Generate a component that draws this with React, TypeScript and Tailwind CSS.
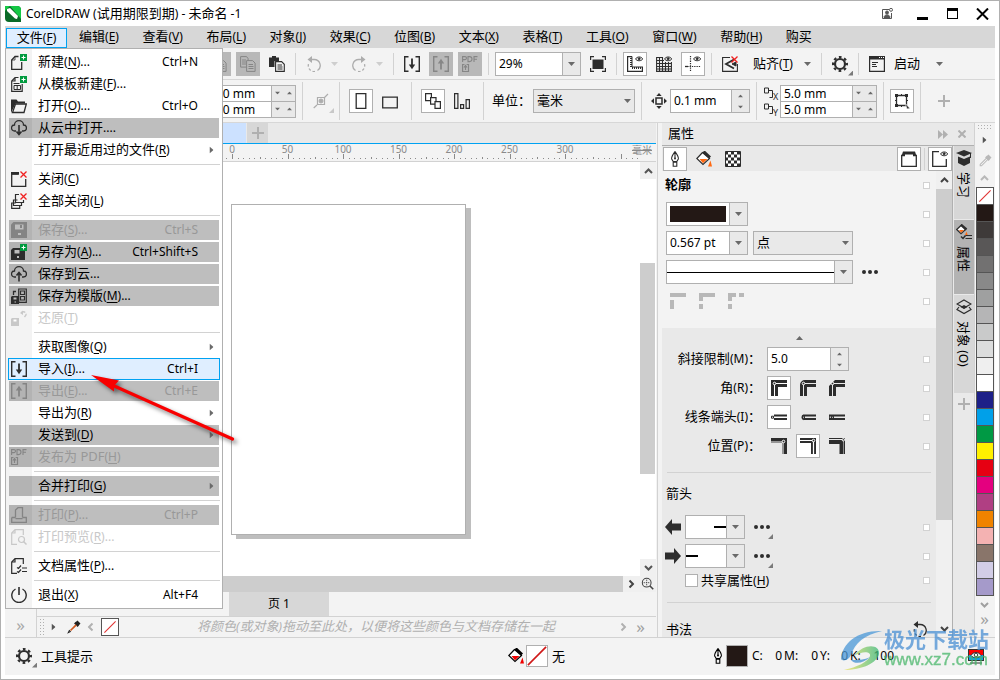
import type { ReactNode } from "react";

const FONT = "font-['Noto_Sans','Noto_Sans_CJK_SC',sans-serif]";

/* ---------- small shared pieces ---------- */

function Icon({ children, className = "" }: { children: ReactNode; className?: string }) {
  return (
    <svg
      viewBox="0 0 16 16"
      width="16"
      height="16"
      fill="none"
      stroke="currentColor"
      className={`shrink-0 ${className}`}
      aria-hidden="true"
    >
      {children}
    </svg>
  );
}

function Caret({ up = false, className = "" }: { up?: boolean; className?: string }) {
  return (
    <svg viewBox="0 0 7 4" width="7" height="4" className={`shrink-0 ${className}`} aria-hidden="true">
      <path d={up ? "M0 4 L3.5 0 L7 4 Z" : "M0 0 L3.5 4 L7 0 Z"} fill="currentColor" />
    </svg>
  );
}

function Label({ text, k, after = "" }: { text: string; k?: string; after?: string }) {
  return (
    <span className="whitespace-nowrap">
      {text}
      <span className="text-xs">
        {k && (
          <>
            (<u className="underline-offset-2">{k}</u>)
          </>
        )}
        {after}
      </span>
    </span>
  );
}

function Sep({ tall = false }: { tall?: boolean }) {
  return <div className={`mx-px w-px shrink-0 bg-[#d2d2d2] ${tall ? "h-[38px]" : "h-[22px]"}`} />;
}

type Look = "plain" | "boxed" | "grey";

function Tool({ label, look = "plain", children }: { label: string; look?: Look; children: ReactNode }) {
  const looks = {
    plain: "text-[#2d2d2d]",
    boxed: "border border-[#b0b0b0] bg-white text-[#2d2d2d]",
    grey: "bg-[#b8b8b8] text-[#868686]",
  };
  return (
    <button aria-label={label} className={`relative flex size-6 shrink-0 items-center justify-center ${looks[look]}`}>
      {children}
    </button>
  );
}

/* Triangle in the corner of a button that opens a flyout */
function Corner() {
  return <span className="absolute -right-px bottom-0 size-[5px] bg-[#7a7a7a] [clip-path:polygon(100%_0,100%_100%,0_100%)]" />;
}

const Plus = () => (
  <g stroke="none">
    <path d="M9 0h7v7H9z" fill="#009a3e" />
    <path d="M12 1.500h1v1.500h1.500v1H13v1.500h-1V4h-1.500V3H12z" fill="#fff" />
  </g>
);
const Cross = () => <path d="M9.500 .5l6 6m0-6l-6 6" stroke="#f02020" strokeWidth="1.300" />;
const Eye = () => (
  <g strokeWidth="1">
    <path d="M8.500 3C10 .3 14.500 .3 15.700 3C14.500 5.300 10 5.300 8.500 3z" />
    <circle cx="12.200" cy="2.800" r="1" fill="currentColor" />
  </g>
);

/* ---------- icons ---------- */

const icons = {
  new: <><path d="M7.500 2.500H4L.7 6v9.300h10V8" strokeWidth="1.300" /><path d="M4 2.500V6H.7" strokeWidth=".8" /><Plus /></>,
  template: <><path d="M7.500 1.500H4L.7 5v10.300h10.500V8M4 1.500V5H1" strokeWidth="1.200" /><path d="M2.500 7.500h6M3 9.500h6.500v4H3zM6.200 9.500v4" /><Plus /></>,
  open: <><path d="M0 15V1.500h5.500L7 3.500h7V5.500H4.500z" fill="currentColor" stroke="none" /><path d="M4.500 6h10.800L13 14.500H1.500z" fill="#f3f3f3" strokeWidth="1.300" /></>,
  cloudDown: <><path d="M5 11H3.500a3 3 0 0 1 0-6C3.500 2.500 5.500.7 8 .7s4.500 1.800 4.500 4.300a3 3 0 0 1 0 6H11" strokeWidth="1.300" /><path d="M8 5v9M5.500 11.500L8 14.500l2.500-3" strokeWidth="1.600" /></>,
  cloudUp: <><path d="M5 11H3.500a3 3 0 0 1 0-6C3.500 2.500 5.500.7 8 .7s4.500 1.800 4.500 4.300a3 3 0 0 1 0 6H11" strokeWidth="1.300" /><path d="M8 15.500V7M5.500 9.500L8 6.500l2.500 3" strokeWidth="1.600" /></>,
  close: <><path d="M.7 2v13.300h14V8M.7 3h7" strokeWidth="1.300" /><path d="M0 1h8v2.500H0z" fill="currentColor" stroke="none" /><Cross /></>,
  closeAll: <><path d="M8 1.500H4.500V5M4.500 4.500v5h8V7M2.500 6.500v6h8v-3M.7 9.500v5.800h8v-3M.7 10h4M2.500 7h4" strokeWidth="1.200" /><Cross /></>,
  save: <><path d="M2.500 0H16v16H0V2.500z" fill="currentColor" stroke="none" /><path d="M4 2.500h8.500v5H4zM7 11h3v2H7z" fill="#bebebe" stroke="none" /><path d="M9 3v3h2V3z" fill="currentColor" stroke="none" /></>,
  saveAs: <><path d="M2 4h12v12H0V6z" fill="currentColor" stroke="none" /><path d="M3.500 6h5v3.500h-5zM6 12h2v2H6z" fill="#bebebe" stroke="none" /><Plus /></>,
  saveTemplate: <><path d="M7.700 1h7.600v13.300H7.700zM9.500 3h4v3.500h-4zM9.500 8.500h4v3.500h-4z" strokeWidth="1.200" /><path d="M5 3.500H2.500V7" strokeWidth="1.300" /><path d="M1 8h7v8H0V9z" fill="currentColor" stroke="none" /><path d="M2.500 9.500h3v2h-3zM3.500 13.500h1.500v1H3.500z" fill="#bebebe" stroke="none" /></>,
  revert: <><path d="M1 8h7v8H0V9z" fill="currentColor" stroke="none" /><path d="M2.500 9.500h3v2h-3z" fill="#fff" stroke="none" /><path d="M10.500 2.500C13 .8 15.500 2.500 15 5l-1.500 2" strokeWidth="1.300" strokeDasharray="4 1.500" /><path d="M9 3l3-2.500V5z" fill="currentColor" stroke="none" /></>,
  import: <><path d="M4.500 .7H.7v14.600H4.500M11.500 .7h3.800v14.600H11.500" strokeWidth="1.400" /><path d="M8 2.500v8" strokeWidth="1.800" /><path d="M4.800 8.500h6.400L8 13.200z" fill="currentColor" stroke="none" /></>,
  export: <><path d="M4.500 .7H.7v14.600H4.500M11.500 .7h3.800v14.600H11.500" strokeWidth="1.400" /><path d="M8 13.500v-8" strokeWidth="1.800" /><path d="M4.800 7.500h6.400L8 2.800z" fill="currentColor" stroke="none" /></>,
  pdf: <><path d="M.6 6V.6H3a1.500 1.500 0 0 1 0 3H.6M6 .6v5h1.500a2.500 2.500 0 0 0 0-5zM12 6V.6h3.500M12 3.200h3" strokeWidth="1.100" /><path d="M2.500 8.500H.6v7H6.500v-7H4.600M3.500 14V9.500M2 11.500l1.500-2 1.500 2" strokeWidth="1.200" /></>,
  print: <><path d="M4.500 10.500V3L7 .7h4.500v9.800M.7 10.500h3.800M11.500 10.500h3.800v4.800H.7v-4.800M4.500 11.700h7" strokeWidth="1.300" /></>,
  preview: <><path d="M6 15.300H.7V4L4 .7h8.300V6M4 .7V4H.7" strokeWidth="1.200" /><circle cx="10.500" cy="10.500" r="3" strokeWidth="1.200" /><path d="M12.500 12.500l3 3" strokeWidth="1.500" /></>,
  docProps: <><path d="M6 15.300H.7V4L4 .7h8.300V6M4 .7V4H.7" strokeWidth="1.200" /><path d="M6 9.500l1.500 1L10 7.500M6 13.500l1.500 1 2.500-3M11 10h5M11 13.500h5" strokeWidth="1.200" /></>,
  power: <><path d="M4.500 2A7.200 7.200 0 1 0 11.500 2" strokeWidth="1.400" /><path d="M8 0v8" strokeWidth="1.600" /></>,
  copy: <><path d="M.6 .6h6l1.500 2v8.500H.6zM2 4h4M2 6h4M2 8h4" /><path d="M6.600 4.600h6l2.500 2.500v8.300H6.600z" fill="#b8b8b8" /><path d="M8.500 8.500h4.500M8.500 10.500h5M8.500 12.500h5" /></>,
  paste: <><path d="M0 1.500h3V0h4v1.500h3V5H5.500v6H0z" fill="currentColor" stroke="none" /><path d="M6.600 5.600h6l2.700 2.700v7.100H6.600zM8.500 9h4.500M8.500 11h5M8.500 13h5" strokeWidth="1.100" /></>,
  undo: <><path d="M4 3.500h4a6 6 0 0 1 3.500 11" strokeWidth="1.300" /><path d="M9 15.500A6 6 0 0 1 2.500 8" strokeWidth="1.300" strokeDasharray="2.500 2" /><path d="M1.500 3.500L6 0v7z" fill="currentColor" stroke="none" /></>,
  redo: <><path d="M12 3.500H8a6 6 0 0 0-3.500 11" strokeWidth="1.300" /><path d="M7 15.500A6 6 0 0 0 13.500 8" strokeWidth="1.300" strokeDasharray="2.500 2" /><path d="M14.500 3.500L10 0v7z" fill="currentColor" stroke="none" /></>,
  full: <><path d="M2.500 3.500h11v9.500h-11z" fill="currentColor" stroke="none" /><path d="M.6 4V.6H4M12 .6h3.400V4M15.400 12v3.400H12M4 15.400H.6V12" strokeWidth="1.200" /></>,
  ruler: <><path d="M5 .6H.6v14.800h14.800V11" strokeWidth="1.200" /><path d="M5 .5v10.500M5 11h11" /><path d="M3 2.500h2M3 4.500h2M3 6.500h2M3 8.500h2M3 10.500h2M5.500 11v2M7.500 11v2M9.500 11v2M11.500 11v2M13.500 11v2" /><Eye /></>,
  grid: <><path d="M.6 1v14.400h14.800V6M.6 1.500H7M3.500 1v14M6.500 1v14M9.500 6v9M12.500 6v9M.6 4.500H8M.6 7.500h15M.6 10.500h15M.6 13h15" strokeWidth="1.100" /><Eye /></>,
  guides: <><path d="M5.500 0v16M0 10.500h16" strokeDasharray="1.300 1" strokeWidth="1.200" /><path d="M0 10.500h3" strokeWidth="1.300" /><Eye /></>,
  snapOff: <><path d="M8 1.500H.6v13.900h14.800V8" strokeWidth="1.100" /><path d="M12 3.500L4 8l8 4.500" strokeWidth="1.800" /><path d="M10 8l4-2v4z" fill="currentColor" /><Cross /></>,
  gear: <><circle cx="8" cy="8" r="5" strokeWidth="2.200" /><circle cx="8" cy="8" r="6.900" strokeWidth="2.200" strokeDasharray="2.700 2.719" strokeDashoffset="1.350" /></>,
  launch: <><path d="M.6 .6h14.800v14.800H.6zM3 6.500h6M3 8.500h4M3 10.500h5" strokeWidth="1.200" /><path d="M0 0h16v3.500H0z" fill="currentColor" stroke="none" /><path d="M10 1.500h1M12 1.500h1M14 1.500h1" stroke="#fff" /></>,
  node: <><path d="M.7 15L4 12M4.500 4.500h7v7h-7zM11.500 4.500L15 1" strokeWidth="1.200" /><circle cx="8" cy="8" r="2" fill="currentColor" /></>,
  portrait: <path d="M3.200 .7h9.600v14.600H3.200z" strokeWidth="1.300" />,
  landscape: <path d="M.7 4.200h14.600v10.600H.7z" strokeWidth="1.300" />,
  pages: <><path d="M.6 .6h5.800v7H.6z" strokeWidth="1.200" /><path d="M5.600 4.600H11v6.500H5.600z" fill="#fff" strokeWidth="1.200" /><path d="M10 8.600h5.400v6.800H10z" fill="#fff" strokeWidth="1.200" /></>,
  bars: <path d="M.6 .6h3.300v14.800H.6zM6.600 11.600h3v3.800h-3zM12.100 6.600h3.300v8.800h-3.300z" strokeWidth="1.200" />,
  nudge: <><path d="M5 5h6v6H5z" strokeWidth="1.500" /><path d="M8 0l2.700 3H5.300zM8 16l2.700-3H5.300zM0 8l3-2.700v5.400zM16 8l-3-2.700v5.400z" fill="currentColor" stroke="none" /></>,
  transform: <><path d="M2.500 2.500h10v10h-10z" strokeWidth="1.300" /><path d="M1 1h3v3H1zM11 1h3v3h-3zM1 11h3v3H1z" fill="currentColor" stroke="none" /><path d="M11 10l5 5.500-3 .5z" fill="currentColor" stroke="#fff" strokeWidth=".6" /><path d="M7.500 1v2M1 7.500h2M7.500 12v2M12 7.500h2" /></>,
  pen: <><path d="M8 .7C5.500 4 4.300 6.500 4.700 8l1.500 2.500h3.600L11.300 8C11.700 6.500 10.500 4 8 .7zM6.200 11.200h3.600v4.100H6.200zM8 1v6" strokeWidth="1.100" /><circle cx="8" cy="7.500" r="1" fill="currentColor" stroke="none" /></>,
  bucket: <><path d="M6.500 1.500L.8 7.500 7 13.500l6.500-6z" fill="#fff" strokeWidth="1.200" /><path d="M7.500 .5l6.500 6" strokeWidth="3" /><path d="M3.500 8h8L7 12.300z" fill="#ff6a13" stroke="none" /><path d="M14.500 9.500l1.500 6h-4z" fill="#ff6a13" stroke="none" /></>,
  dockProps: <><path d="M5.500 1L.7 5.500 5 9.700l4.500-4.200z" fill="#fff" strokeWidth="1.300" /><path d="M5 .8l5.500 4.700" strokeWidth="2.400" /><path d="M3 6h5L5 8.700z" fill="#ff6a13" stroke="none" /><path d="M10.500 7.500l1.200 3.500H9z" fill="#ff6a13" stroke="none" /><path d="M5 12.500l2 2 2.500-3" strokeWidth="1.500" /><path d="M9.500 11.500H16M9.500 14.500H16" strokeWidth="1.200" /></>,
  checker: (
    <>
      <path d="M.5 .5h15v15H.5z" fill="#fff" />
      {[0, 1, 2, 3, 4].map((r) => (
        <path key={r} d={r % 2 ? "M3 0h3M9 0h3" : "M.5 0h2.500M6 0h3M12 0h3"} transform={`translate(0 ${2 + r * 3})`} strokeWidth="3" />
      ))}
    </>
  ),
  frame: <><path d="M.7 4.500h14.600v10.800H.7z" strokeWidth="1.300" /><path d="M2 .5h12l1.500 4.500H.5z" fill="currentColor" stroke="none" /><path d="M4 3.500h8v3H4z" fill="#fff" stroke="none" /></>,
  frameEye: <><path d="M7 .7H.7v14.600h13.600V8" strokeWidth="1.300" /><Eye /></>,
  pick: <><path d="M11 1.500l3.500 3.500M9 3l4 4" strokeWidth="2.600" /><path d="M10.500 5.500L4 12" strokeWidth="2" stroke="#d05a20" /><path d="M3 11.500L1.500 14.500l3-1.500" strokeWidth="1.200" /></>,
  pickGrey: <><path d="M11 1.500l3.500 3.500M9 3l4 4" strokeWidth="2.600" /><path d="M10 4.500L2.500 12v1.500H4L11.500 6" strokeWidth="1.200" /></>,
  learn: <><path d="M8 0l8 3-8 3.500L0 3z" fill="currentColor" stroke="none" /><path d="M2 6.500l6 2.500 6-2.500V13l-6 3-6-3z" fill="currentColor" stroke="none" /><path d="M14.500 3v5" /></>,
  layers: <><path d="M8 1l7 4-7 4-7-4z" strokeWidth="1.200" /><path d="M8 6l3.500 2L8 10 4.500 8z" fill="currentColor" stroke="none" /><path d="M3 8l-2 2.500 7 4 7-4L13 8" strokeWidth="1.200" /></>,
  zoomAll: <><circle cx="6.500" cy="6.500" r="5" strokeWidth="1.200" /><path d="M10 10l4 4" strokeWidth="1.800" /><path d="M6.500 3v7M3 6.500h7" strokeDasharray="1.500 1" /></>,
};

const Ico = ({ name, className }: { name: keyof typeof icons; className?: string }) => (
  <Icon className={className}>{icons[name]}</Icon>
);

/* ---------- file menu ---------- */

type Item = {
  icon?: keyof typeof icons;
  text: string;
  k?: string;
  after?: string;
  keys?: string;
  grey?: boolean;
  off?: boolean;
  sub?: boolean;
  active?: boolean;
};

const menuGroups: Item[][] = [
  [
    { icon: "new", text: "新建", k: "N", after: "...", keys: "Ctrl+N" },
    { icon: "template", text: "从模板新建", k: "F", after: "..." },
    { icon: "open", text: "打开", k: "O", after: "...", keys: "Ctrl+O" },
    { icon: "cloudDown", text: "从云中打开", after: "....", grey: true },
    { text: "打开最近用过的文件", k: "R", sub: true },
  ],
  [
    { icon: "close", text: "关闭", k: "C" },
    { icon: "closeAll", text: "全部关闭", k: "L" },
  ],
  [
    { icon: "save", text: "保存", k: "S", after: "...", keys: "Ctrl+S", grey: true, off: true },
    { icon: "saveAs", text: "另存为", k: "A", after: "...", keys: "Ctrl+Shift+S", grey: true },
    { icon: "cloudUp", text: "保存到云", after: "...", grey: true },
    { icon: "saveTemplate", text: "保存为模版", k: "M", after: "...", grey: true },
    { icon: "revert", text: "还原", k: "T", off: true },
  ],
  [
    { text: "获取图像", k: "Q", sub: true },
    { icon: "import", text: "导入", k: "I", after: "...", keys: "Ctrl+I", active: true },
    { icon: "export", text: "导出", k: "E", after: "...", keys: "Ctrl+E", grey: true, off: true },
    { text: "导出为", k: "R", sub: true },
    { text: "发送到", k: "D", grey: true, sub: true },
    { icon: "pdf", text: "发布为 PDF", k: "H", grey: true, off: true },
  ],
  [{ text: "合并打印", k: "G", grey: true, sub: true }],
  [
    { icon: "print", text: "打印", k: "P", after: "...", keys: "Ctrl+P", grey: true, off: true },
    { icon: "preview", text: "打印预览", k: "R", after: "...", off: true },
  ],
  [{ icon: "docProps", text: "文档属性", k: "P", after: "..." }],
  [{ icon: "power", text: "退出", k: "X", keys: "Alt+F4" }],
];

function MenuRow({ item }: { item: Item }) {
  const tone = item.off ? (item.grey ? "text-[#989898]" : "text-[#c8c8c8]") : "text-black";
  const iconTone = item.off ? (item.grey ? "text-[#848484]" : "") : "text-[#2d2d2d]";
  const box = item.active
    ? "-mx-px h-[22px] border border-[#00a2f2] bg-[#dfeeff]"
    : item.grey
      ? "my-px h-5 bg-[#bebebe]"
      : "my-px h-5";
  return (
    <button disabled={item.off} className={`flex items-center text-left ${tone} ${box}`}>
      <span className={`flex h-full w-[23px] items-center pl-0.5 ${item.grey ? "bg-[#b3b3b3]" : ""}`}>
        {item.icon && <Ico name={item.icon} className={iconTone} />}
      </span>
      <span className="flex-1 pb-0.5 pl-1.5">
        <Label text={item.text} k={item.k} after={item.after} />
      </span>
      {item.keys && <span className="pr-[21px] text-xs">{item.keys}</span>}
      {item.sub && <Caret className="mr-1 -rotate-90 text-[#6a6a6a]" />}
    </button>
  );
}

function FileMenu() {
  return (
    <div className="absolute top-[21px] -left-px z-20 w-[218px] border border-[#b0b0b0] bg-[linear-gradient(to_right,#f3f3f3_26px,#fff_26px)] px-[3px] pt-0.5 pb-0.5">
      {menuGroups.map((group, i) => (
        <div key={i} className="flex flex-col">
          {i > 0 && <div className="my-[3px] -mr-px ml-[25px] h-px bg-[#d2d2d2]" />}
          {group.map((item) => (
            <MenuRow key={item.text} item={item} />
          ))}
        </div>
      ))}
    </div>
  );
}

const menus = [
  ["编辑", "E"],
  ["查看", "V"],
  ["布局", "L"],
  ["对象", "J"],
  ["效果", "C"],
  ["位图", "B"],
  ["文本", "X"],
  ["表格", "T"],
  ["工具", "O"],
  ["窗口", "W"],
  ["帮助", "H"],
];

function MenuBar() {
  return (
    <nav className="flex h-[22px] shrink-0 items-center gap-0.5 bg-[#d7d7d7] pl-px">
      <div className="relative">
        <button className="h-5 w-[61px] border border-[#00a2f2] bg-[#dfeeff] pb-0.5 leading-4">
          <Label text="文件" k="F" />
        </button>
        <FileMenu />
      </div>
      <div className="flex w-[753px] justify-between">
        {menus.map(([text, k]) => (
          <button key={text} className="h-5 px-2.5 pb-0.5 leading-4">
            <Label text={text} k={k} />
          </button>
        ))}
        <button className="h-5 px-2.5 pb-0.5 leading-4">购买</button>
      </div>
    </nav>
  );
}

/* ---------- title and tool bars ---------- */

function TitleBar() {
  return (
    <header className="flex h-[25px] shrink-0 items-center">
      <svg viewBox="0 0 16 16" width="16" height="16" aria-hidden="true">
        <path d="M0 0h12a4 4 0 0 1 4 4v12H4a4 4 0 0 1-4-4z" fill="#0a6a28" />
        <path d="M0 0h12a4 4 0 0 1 4 4v9L5 0 0 5z" fill="#14c845" />
        <path d="M2 3l3-1 8 8-1 3-2-.5L2 5z" fill="#fff" />
      </svg>
      <h1 className="flex-1 pb-0.5 pl-[5px]">
        <span className="text-xs">CorelDRAW (</span>试用期限到期<span className="text-xs">) - </span>未命名<span className="text-xs"> -1</span>
      </h1>
      <button aria-label="账户" className="mr-6 text-[#555]">
        <svg viewBox="0 0 11 11" width="11" height="11" fill="none" stroke="currentColor">
          <path d="M7 1.500H.5v9h9V5" />
          <circle cx="5" cy="4.500" r="1.500" fill="currentColor" />
          <path d="M2 9.500C2 6 8 6 8 9.500z" fill="currentColor" />
          <circle cx="9" cy="1.800" r="1.500" />
        </svg>
      </button>
      <button aria-label="最小化" className="mr-[19px] flex h-3 w-[11px] items-end">
        <span className="h-[3px] w-full bg-black" />
      </button>
      <button aria-label="最大化" className="mr-[18px] h-[11px] w-[11px] border border-t-[3px] border-black" />
      <button aria-label="关闭" className="mr-1.5">
        <svg viewBox="0 0 13 12" width="13" height="12" stroke="#000" strokeWidth="2">
          <path d="M1 .5l11 11M12 .5l-11 11" />
        </svg>
      </button>
    </header>
  );
}

function StandardBar() {
  const drop = <span className="flex w-4 justify-center text-[#8a8a8a]"><Caret /></span>;
  return (
    <div className="flex h-8 shrink-0 items-center gap-[5px] border-b border-[#d7d7d7] bg-[#f3f3f3] pl-[202px]">
      <Tool label="剪切" look="grey"><Ico name="copy" /></Tool>
      <Tool label="复制" look="grey"><Ico name="copy" /></Tool>
      <Tool label="粘贴"><Ico name="paste" /></Tool>
      <Sep />
      <div className="flex items-center opacity-35">
        <Tool label="撤消"><Ico name="undo" /></Tool>
        {drop}
      </div>
      <div className="flex items-center opacity-35">
        <Tool label="重做"><Ico name="redo" /></Tool>
        {drop}
      </div>
      <Sep />
      <Tool label="导入"><Ico name="import" /></Tool>
      <Tool label="导出" look="grey"><Ico name="export" /></Tool>
      <Tool label="发布为 PDF" look="grey"><Ico name="pdf" /></Tool>
      <Sep />
      <div className="flex h-6 w-[86px] border border-[#b0b0b0] bg-white">
        <input aria-label="缩放级别" defaultValue="29%" className="w-full min-w-0 flex-1 pl-[3px] text-xs outline-none" />
        <button aria-label="缩放列表" className="flex w-[18px] items-center justify-center border-l border-[#b0b0b0] bg-[#e9e9e9] text-[#6a6a6a]">
          <Caret />
        </button>
      </div>
      <Tool label="全屏预览"><Ico name="full" /></Tool>
      <Sep />
      <Tool label="显示标尺" look="boxed"><Ico name="ruler" /></Tool>
      <Tool label="显示网格"><Ico name="grid" /></Tool>
      <Tool label="显示辅助线" look="boxed"><Ico name="guides" /></Tool>
      <Sep />
      <Tool label="贴齐关闭"><Ico name="snapOff" /></Tool>
      <button className="flex items-center pl-1.5">
        <span className="w-[46px] pb-0.5 text-left"><Label text="贴齐" k="T" /></span>
        <span className="flex w-4 justify-center text-[#6a6a6a]"><Caret /></span>
      </button>
      <Sep />
      <Tool label="选项"><Ico name="gear" /><Corner /></Tool>
      <Sep />
      <Tool label="应用程序启动器"><Ico name="launch" /></Tool>
      <button className="flex items-center">
        <span className="pb-0.5">启动</span>
        <span className="ml-[11px] flex w-4 justify-center text-[#6a6a6a]"><Caret /></span>
      </button>
    </div>
  );
}

function PairField({ label, value, first = false }: { label: string; value: string; first?: boolean }) {
  return (
    <div className={`flex h-[17px] border border-[#b0b0b0] bg-white ${first ? "" : "-mt-px"}`}>
      <input aria-label={label} defaultValue={value} className="w-full min-w-0 flex-1 pl-[3px] text-xs leading-[15px] outline-none" />
      <div className="flex w-[24px] items-center justify-around border-l border-[#b0b0b0] bg-[#e9e9e9] text-[#6a6a6a]">
        <button aria-label={`${label} 减`}><Caret className="scale-75" /></button>
        <button aria-label={`${label} 加`}><Caret up className="scale-75" /></button>
      </div>
    </div>
  );
}

function SpinField({ label, value, id, className }: { label: string; value: string; id?: string; className: string }) {
  return (
    <div className={`flex h-6 border border-[#b0b0b0] bg-white ${className}`}>
      <input id={id} aria-label={label} defaultValue={value} className="w-full min-w-0 flex-1 pl-[3px] text-xs outline-none" />
      <div className="flex w-[18px] flex-col items-center justify-around border-l border-[#b0b0b0] bg-[#e9e9e9] text-[#6a6a6a]">
        <button aria-label={`${label} 加`} className="flex"><Caret up className="scale-75" /></button>
        <button aria-label={`${label} 减`} className="flex"><Caret className="scale-75" /></button>
      </div>
    </div>
  );
}

function SelectField({ label, value, id, className }: { label: string; value: string; id?: string; className: string }) {
  return (
    <div className={`relative ${className}`}>
      <select id={id} aria-label={label} className="h-6 w-full appearance-none border border-[#b0b0b0] bg-[#e9e9e9] pb-0.5 pl-[3px] leading-5 outline-none">
        <option>{value}</option>
      </select>
      <Caret className="pointer-events-none absolute top-2.5 right-1 text-[#6a6a6a]" />
    </div>
  );
}

function Dup({ axis }: { axis: string }) {
  return (
    <span className="flex h-4 w-4 items-end text-[#2d2d2d]">
      <svg viewBox="0 0 9 11" width="9" height="16" fill="none" stroke="currentColor" aria-hidden="true">
        <path d="M.5 .5h4v5h-4zM4.500 3h4v7h-3" />
      </svg>
      <span className="text-[9px] leading-[9px]">{axis}</span>
    </span>
  );
}

function PropertyBar() {
  return (
    <div className="flex h-[43px] shrink-0 items-center gap-[5px] border-b border-[#d7d7d7] bg-[#f3f3f3] pl-[190px]">
      <div className="w-[101px]">
        <PairField label="页面宽度" value="210.0 mm" first />
        <PairField label="页面高度" value="297.0 mm" />
      </div>
      <Sep tall />
      <div className="opacity-35"><Tool label="节点"><Ico name="node" /><Corner /></Tool></div>
      <Sep tall />
      <div className="flex gap-[5px] px-[3px]">
        <Tool label="纵向" look="boxed"><Ico name="portrait" /></Tool>
        <Tool label="横向"><Ico name="landscape" /></Tool>
      </div>
      <Sep tall />
      <div className="flex gap-[5px] px-[3px]">
        <Tool label="所有页面" look="boxed"><Ico name="pages" /></Tool>
        <Tool label="当前页面"><Ico name="bars" /></Tool>
      </div>
      <Sep tall />
      <div className="flex items-center pl-0.5">
        <label htmlFor="units" className="w-[41px] pb-0.5 whitespace-nowrap">单位：</label>
        <SelectField id="units" label="单位" value="毫米" className="w-[102px]" />
      </div>
      <Sep tall />
      <div className="flex items-center">
        <span className="w-[22px] pl-[3px] text-[#2d2d2d]"><Ico name="nudge" /></span>
        <SpinField label="微调距离" value="0.1 mm" className="w-[80px]" />
      </div>
      <Sep tall />
      <div className="flex items-center pl-px">
        <div className="w-4"><Dup axis="X" /><Dup axis="Y" /></div>
        <div className="w-[97px]">
          <PairField label="再制偏移 X" value="5.0 mm" first />
          <PairField label="再制偏移 Y" value="5.0 mm" />
        </div>
      </div>
      <Sep tall />
      <Tool label="变换" look="boxed"><Ico name="transform" /></Tool>
      <Sep tall />
      <button aria-label="快速自定义" className="flex w-[34px] justify-center"><PlusSign /></button>
    </div>
  );
}

function PlusSign() {
  return (
    <svg viewBox="0 0 12 12" width="12" height="12" stroke="#b0b0b0" strokeWidth="2" aria-hidden="true">
      <path d="M6 0v12M0 6h12" />
    </svg>
  );
}

function Chevron({ className = "" }: { className?: string }) {
  return (
    <svg viewBox="0 0 9 6" width="9" height="6" fill="none" stroke="currentColor" strokeWidth="2" className={className} aria-hidden="true">
      <path d="M1 1l3.500 3.500L8 1" />
    </svg>
  );
}

/* ---------- drawing window ---------- */

const ORIGIN = 195;
const MARK = 55.5;

function Ruler() {
  const ticks = Array.from({ length: 84 }, (_, i) => i - 10);
  return (
    <div className="flex h-[18px] shrink-0 border-b border-[#d2d2d2] bg-[#f3f3f3]">
      <svg className="h-[17px] flex-1 overflow-visible" aria-hidden="true">
        {ticks.map((i) => {
          const len = i % 10 === 0 ? 5 : i % 5 === 0 ? 2 : 1;
          return <rect key={i} x={Math.round(ORIGIN + (i * MARK) / 10)} y={15 - len} width="1" height={len} fill="#8a8a8a" />;
        })}
        {[0, 50, 100, 150, 200, 250, 300].map((n, i) => (
          <text key={n} x={ORIGIN + i * MARK} y="9" textAnchor="middle" fontSize="10" fill="#8a8a8a">
            {n}
          </text>
        ))}
      </svg>
      <span className="pr-1 text-[10px] leading-3 text-[#8a8a8a] line-through">毫米</span>
    </div>
  );
}

function Canvas() {
  return (
    <div className="flex min-h-0 flex-1">
      <div className="relative flex-1 overflow-hidden bg-white">
        <div className="absolute top-[42px] left-[194px] h-[331px] w-[235px] border border-[#b0b0b0] bg-white shadow-[5px_4px_0_0_#bebebe]" />
      </div>
      <div className="flex w-4 flex-col bg-white text-[#555]">
        <button aria-label="向上滚动" className="flex h-[17px] w-full items-center justify-center bg-[#f0f0f0]">
          <Chevron className="rotate-180" />
        </button>
        <div className="mt-[84px] h-[211px] w-[15px] bg-[#cdcdcd]" />
        <button aria-label="向下滚动" className="mt-auto flex h-[17px] w-full items-center justify-center bg-[#f0f0f0]">
          <Chevron />
        </button>
      </div>
    </div>
  );
}

function NoColor({ className }: { className: string }) {
  return (
    <svg viewBox="0 0 20 20" className={className} aria-hidden="true">
      <rect x="0" y="0" width="20" height="20" fill="#fff" />
      <path d="M3 17L17 3" stroke="#e03030" strokeWidth="1.300" />
    </svg>
  );
}

function Dots({ className }: { className: string }) {
  return <div className={`bg-[radial-gradient(#b0b0b0_0.8px,transparent_1px)] bg-[size:3px_3px] ${className}`} />;
}

function Workspace() {
  return (
    <main className="flex min-w-0 flex-1">
      <div className="flex w-8 shrink-0 flex-col justify-end border-r border-[#d2d2d2] bg-[#f3f3f3]">
        <button aria-label="更多工具" className="h-[24px] text-[17px] leading-5 text-[#a8a8a8]">»</button>
      </div>
      <div className="flex min-w-0 flex-1 flex-col">
        <div className="flex h-5 shrink-0 gap-px bg-[#e9e9e9]">
          <div className="w-[209px] bg-[#cce1ff]" />
          <button aria-label="新建文档" className="flex w-[21px] items-center justify-center bg-[#d7d7d7]"><PlusSign /></button>
        </div>
        <div className="h-px shrink-0 bg-[#00a2f2]" />
        <Ruler />
        <Canvas />
        <div className="flex h-4 shrink-0 items-center bg-[#f0f0f0] text-[#444]">
          <div className="h-full flex-1 bg-[#cdcdcd]" />
          <button aria-label="向右滚动" className="flex w-[17px] justify-center"><Chevron className="-rotate-90" /></button>
          <button aria-label="缩放到页面" className="flex w-4 justify-center"><Ico name="zoomAll" className="size-3.5" /></button>
        </div>
        <div className="flex h-[25px] shrink-0 border-b border-[#d2d2d2] bg-[#f3f3f3] pl-[192px]">
          <button className="w-[100px] bg-[#d7d7d7] text-xs">页 1</button>
        </div>
        <div className="flex h-[20px] shrink-0 items-center bg-[#f3f3f3] text-[#b0b0b0]">
          <Dots className="ml-0.5 h-[18px] w-1.5" />
          <Caret className="ml-[5px] -rotate-90 text-[#555]" />
          <Ico name="pick" className="ml-2.5 size-3.5 text-[#222]" />
          <Chevron className="ml-[5px] rotate-90" />
          <NoColor className="ml-1.5 size-[18px] border border-[#555]" />
          <p className="min-w-0 flex-1 pb-0.5 pl-[78px] whitespace-nowrap italic">
            将颜色<span className="text-xs">(</span>或对象<span className="text-xs">)</span>拖动至此处，以便将这些颜色与文档存储在一起
          </p>
          <Chevron className="-rotate-90" />
          <span className="pr-[11px] pl-2 text-[17px] leading-4 text-[#a0a0a0]">»</span>
        </div>
      </div>
    </main>
  );
}

/* ---------- properties docker ---------- */

function PanelRow({ children, mark = true, className = "" }: { children: ReactNode; mark?: boolean; className?: string }) {
  return (
    <div className={`flex h-6 items-center pr-1.5 ${className}`}>
      <div className="flex flex-1 items-center">{children}</div>
      {mark && <span className="size-[7px] border border-[#d2d2d2] bg-white" />}
    </div>
  );
}

function RowLabel({ text, k, htmlFor }: { text: string; k: string; htmlFor?: string }) {
  return (
    <label htmlFor={htmlFor} className="mr-1.5 w-[99px] pb-0.5 text-right whitespace-nowrap">
      {text}<span className="text-xs">({k})</span>：
    </label>
  );
}

function DropBox({ label, className, children }: { label: string; className: string; children: ReactNode }) {
  return (
    <button aria-label={label} className={`flex h-6 border border-[#b0b0b0] bg-white ${className}`}>
      <span className="flex h-full flex-1 items-center">{children}</span>
      <span className="flex h-full w-[18px] items-center justify-center border-l border-[#b0b0b0] bg-[#e9e9e9] text-[#6a6a6a]"><Caret /></span>
    </button>
  );
}

function More({ corner = false }: { corner?: boolean }) {
  return (
    <button aria-label="更多" className="relative flex h-6 w-5 items-center justify-center text-[#2d2d2d]">
      <Icon>
        <path d="M2 8h.01M8 8h.01M14 8h.01" strokeWidth="4" strokeLinecap="round" />
      </Icon>
      {corner && <Corner />}
    </button>
  );
}

const corners: [string, ReactNode][] = [
  ["斜接角", <><path d="M0 0h16v7H7v9H0z" fill="currentColor" stroke="none" /><path d="M16 3.500H3.500V16" stroke="#fff" /><circle cx="3.500" cy="3.500" r="1.300" fill="#2d2d2d" stroke="#fff" /></>],
  ["圆角", <><path d="M5 0h11v7H7v9H0V5a5 5 0 0 1 5-5z" fill="currentColor" stroke="none" /><path d="M16 3.500H3.500V16" stroke="#e9e9e9" /><circle cx="3.500" cy="3.500" r="1.300" fill="#2d2d2d" stroke="#fff" /></>],
  ["斜切角", <><path d="M6 0h10v7H7v9H0V6z" fill="currentColor" stroke="none" /><path d="M16 3.500H3.500V16" stroke="#e9e9e9" /><circle cx="3.500" cy="3.500" r="1.300" fill="#2d2d2d" stroke="#fff" /></>],
];
const caps: [string, ReactNode][] = [
  ["方形端头", <><path d="M3 6.500h13M3 10h13" strokeWidth="2" /><path d="M.5 7.200h2v2h-2z" /></>],
  ["圆形端头", <><path d="M4 6.500h12M4 10h12" strokeWidth="2" /><path d="M4 6a2.300 2.300 0 0 0 0 4.500" strokeWidth="1.500" /><path d="M2.500 7.200h2v2h-2z" /></>],
  ["延伸端头", <><path d="M0 6.500h16M0 10h16" strokeWidth="2" /><path d="M.7 6v4M2.500 7.200h2v2h-2z" /></>],
];
const places: [string, ReactNode][] = [
  ["外部轮廓", <><path d="M0 2.500h13.500V16" strokeWidth="5" /><path d="M0 4h12V16" stroke="#fff" /><circle cx="12.500" cy="3.500" r="1.300" fill="#2d2d2d" stroke="#fff" /></>],
  ["居中的轮廓", <><path d="M0 2.500h13.500V16" strokeWidth="5" /><path d="M0 2.500h13.500V16" stroke="#fff" strokeWidth="1.200" /><circle cx="13.500" cy="2.500" r="1.300" fill="#2d2d2d" stroke="#fff" /></>],
  ["内部轮廓", <><path d="M0 4h12.500V16" strokeWidth="4" /><path d="M0 .5h15.500V16" /><circle cx="14.300" cy="1.800" r="1.200" fill="#2d2d2d" stroke="#fff" /></>],
];

function Choice({ list, on }: { list: [string, ReactNode][]; on: number }) {
  return (
    <div className="flex gap-[5px]">
      {list.map(([name, art], i) => (
        <Tool key={name} label={name} look={i === on ? "boxed" : "plain"}>
          <Icon>{art}</Icon>
        </Tool>
      ))}
    </div>
  );
}

function Properties() {
  return (
    <section className="flex min-h-0 flex-1 flex-col">
      <div className="flex h-[25px] shrink-0 items-end bg-[#e9e9e9] pl-px">
        <Tool label="轮廓" look="boxed"><Ico name="pen" /></Tool>
        <div className="ml-[5px] flex flex-1 gap-[5px]">
          <Tool label="填充"><Ico name="bucket" /></Tool>
          <Tool label="透明度"><Ico name="checker" /></Tool>
        </div>
        <Tool label="滚动模式" look="boxed"><Ico name="frame" /></Tool>
        <div className="mx-[3px] mb-px h-[22px] w-px bg-[#d2d2d2]" />
        <Tool label="显示" look="boxed"><Ico name="frameEye" /></Tool>
      </div>
      <div className="flex min-h-0 flex-1">
        <div className="min-w-0 flex-1 overflow-hidden bg-[#e9e9e9]">
          <div className="flex flex-col gap-[5px] bg-[#f3f3f3] pt-0.5 pb-[15px]">
            <PanelRow><h2 className="pb-0.5 pl-[3px] font-bold">轮廓</h2></PanelRow>
            <PanelRow className="pl-1">
              <DropBox label="轮廓颜色" className="w-[82px]"><span className="mx-[3px] h-4 flex-1 bg-[#231815]" /></DropBox>
            </PanelRow>
            <PanelRow className="pl-1">
              <div className="flex h-6 w-[82px] border border-[#b0b0b0] bg-white">
                <input aria-label="轮廓宽度" defaultValue="0.567 pt" className="w-full min-w-0 flex-1 pl-[3px] text-xs outline-none" />
                <button aria-label="宽度列表" className="flex w-[18px] items-center justify-center border-l border-[#b0b0b0] bg-[#e9e9e9] text-[#6a6a6a]"><Caret /></button>
              </div>
              <SelectField label="宽度单位" value="点" className="ml-[5px] w-[100px]" />
            </PanelRow>
            <PanelRow className="pl-1">
              <DropBox label="线条样式" className="w-[187px]"><span className="h-px flex-1 bg-black" /></DropBox>
              <span className="ml-[7px]"><More /></span>
            </PanelRow>
            <PanelRow className="pl-2">
              <div className="flex gap-[13px] text-[#b8b8b8]">
                <Icon><path d="M0 2h16M2 7v9" strokeWidth="4" /></Icon>
                <Icon><path d="M0 2h16M2 2v6M2 11v5" strokeWidth="4" /></Icon>
                <Icon><path d="M0 2h8M11 2h5M2 2v6M2 11v5" strokeWidth="4" /></Icon>
              </div>
            </PanelRow>
          </div>
          <div className="flex h-[19px] items-center justify-center text-[#6a6a6a]"><Caret up /></div>
          <div className="flex flex-col gap-[5px]">
            <PanelRow>
              <RowLabel text="斜接限制" k="M" htmlFor="miter" />
              <SpinField id="miter" label="斜接限制" value="5.0" className="w-[82px]" />
            </PanelRow>
            <PanelRow><RowLabel text="角" k="R" /><Choice list={corners} on={0} /></PanelRow>
            <PanelRow><RowLabel text="线条端头" k="I" /><Choice list={caps} on={0} /></PanelRow>
            <PanelRow><RowLabel text="位置" k="P" /><Choice list={places} on={1} /></PanelRow>
          </div>
          <hr className="mx-[5px] mt-[14px] border-[#d2d2d2]" />
          <h2 className="h-[42px] pl-1 leading-10">箭头</h2>
          <div className="flex flex-col gap-[5px]">
            <PanelRow className="pl-[3px]">
              <Icon className="text-[#2d2d2d]"><path d="M0 8l7-8v4.500h9v7H7V16z" fill="currentColor" stroke="none" /></Icon>
              <DropBox label="起始箭头" className="ml-1 w-[60px]"><span className="ml-auto h-0.5 w-3 bg-black" /></DropBox>
              <span className="ml-[7px]"><More corner /></span>
            </PanelRow>
            <PanelRow className="pl-[3px]">
              <Icon className="text-[#2d2d2d]"><path d="M16 8L9 0v4.500H0v7h9V16z" fill="currentColor" stroke="none" /></Icon>
              <DropBox label="终止箭头" className="ml-1 w-[60px]"><span className="h-0.5 w-3 bg-black" /></DropBox>
              <span className="ml-[7px]"><More corner /></span>
            </PanelRow>
          </div>
          <PanelRow className="pl-[23px]">
            <label className="flex items-center gap-[3px]">
              <input type="checkbox" className="size-[13px] appearance-none border border-[#b0b0b0] bg-white" />
              <Label text="共享属性" k="H" />
            </label>
          </PanelRow>
          <hr className="mx-[5px] mt-2.5 border-[#d2d2d2]" />
          <div className="flex items-start justify-between pt-4 pr-2 pl-1">
            <h2>书法</h2>
            <Ico name="undo" className="mt-0.5 text-[#2d2d2d]" />
          </div>
        </div>
        <div className="flex w-4 shrink-0 flex-col items-center bg-[#f0f0f0] text-[#444]">
          <button aria-label="向上" className="flex h-[18px] items-center"><Chevron className="rotate-180" /></button>
          <div className="h-[331px] w-full bg-[#cdcdcd]" />
          <button aria-label="向下" className="mt-auto flex h-[17px] items-center"><Chevron /></button>
        </div>
      </div>
    </section>
  );
}

function DockTab({ text, latin = "", on = false, icon, className }: { text: string; latin?: string; on?: boolean; icon: keyof typeof icons; className: string }) {
  return (
    <button className={`flex w-5 flex-col items-center gap-1.5 pt-1 text-[#2d2d2d] ${on ? "bg-[#b3b3b3]" : "bg-[#d7d7d7]"} ${className}`}>
      <Ico name={icon} />
      <span className="leading-5 whitespace-nowrap text-black [text-orientation:sideways] [writing-mode:vertical-rl]">
        {text}<span className="text-xs">{latin}</span>
      </span>
    </button>
  );
}

function Docker() {
  return (
    <aside className="ml-1 flex w-[312px] shrink-0 flex-col bg-[#e9e9e9]">
      <div className="flex h-[23px] shrink-0 items-center border-b border-[#b0b0b0] text-[#b0b0b0]">
        <h2 className="flex-1 pb-0.5 pl-1.5 text-black">属性</h2>
        <button aria-label="折叠" className="mr-2.5">
          <svg viewBox="0 0 10 9" width="10" height="9" fill="currentColor"><path d="M0 0l5 4.500L0 9zM5 0l5 4.500L5 9z" /></svg>
        </button>
        <button aria-label="关闭面板" className="mr-2">
          <svg viewBox="0 0 8 8" width="8" height="8" stroke="currentColor" strokeWidth="2"><path d="M.5 .5l7 7M7.500 .5l-7 7" /></svg>
        </button>
      </div>
      <div className="flex min-h-0 flex-1">
        <Properties />
        <div className="flex w-[22px] shrink-0 flex-col items-center gap-px border-l border-[#b0b0b0]">
          <DockTab text="学习" className="h-[73px]" icon="learn" />
          <DockTab text="属性" on className="h-[74px]" icon="dockProps" />
          <DockTab text="对象" latin=" (O)" className="h-[98px]" icon="layers" />
          <button aria-label="添加面板" className="mt-1"><PlusSign /></button>
        </div>
      </div>
    </aside>
  );
}

const swatches = [
  "#231815", "#3e3a39", "#595757", "#727171", "#898989", "#9fa0a0", "#b5b5b6", "#c9caca",
  "#dcdddd", "#efefef", "#ffffff", "#1d2088", "#00a0e9", "#009944", "#fff100", "#e60012",
  "#e4007f", "#b03f83", "#f08300", "#f4b2b2", "#89756a", "#d2cde6", "#a59aca",
];

function Palette() {
  return (
    <div className="flex w-[21px] shrink-0 flex-col items-center border-l border-[#d2d2d2] bg-[#f3f3f3] pr-px text-[#b8b8b8]">
      <Dots className="mt-px h-1.5 w-[15px]" />
      <Caret className="mt-2 -rotate-90 text-[#555]" />
      <Ico name="pickGrey" className="mt-3 size-3.5" />
      <Chevron className="mt-[7px] mb-1.5 rotate-180" />
      <div className="flex w-[18px] flex-col border border-[#555]">
        <NoColor className="h-4 w-full" />
        {swatches.map((c) => (
          <button key={c} aria-label={c} className="h-[17px] border-t border-[#555]" style={{ backgroundColor: c }} />
        ))}
      </div>
      <Chevron className="mt-1.5 text-[#a0a0a0]" />
      <span className="mt-[3px] text-[17px] leading-4 text-[#a0a0a0]">»</span>
    </div>
  );
}

/* ---------- status bar and overlays ---------- */

function StatusBar() {
  return (
    <footer className="flex h-[38px] shrink-0 items-center border-t border-[#d2d2d2] bg-[#f3f3f3] pr-[11px] pb-0.5 pl-[7px]">
      <Tool label="自定义"><Ico name="gear" /><Corner /></Tool>
      <p className="w-[472px] pl-[5px]">工具提示</p>
      <div className="flex flex-1 items-center">
        <Icon>
          <path d="M6.500 1.500L.8 7.500 7 13.500l6.500-6z" fill="#fff" strokeWidth="1.200" />
          <path d="M7.500 .5l6.500 6" strokeWidth="3" />
          <path d="M3.500 8h8L7 12.300zM14.500 9.500l1.500 6h-4z" fill="#f00000" stroke="none" />
        </Icon>
        <svg viewBox="0 0 22 22" className="ml-0.5 size-[22px] border border-[#b0b0b0] bg-white" aria-hidden="true">
          <path d="M1 21L21 1" stroke="#d01818" strokeWidth="1.800" />
        </svg>
        <span className="pl-1">无</span>
      </div>
      <Ico name="pen" />
      <span className="size-[22px] border border-[#b0b0b0] bg-[#231815]" />
      <div className="flex w-[220px] gap-0.5 pl-1 text-xs">
        <span className="flex w-[30px] justify-between"><b className="font-normal">C:</b>0</span>
        <span className="flex w-[34px] justify-between"><b className="font-normal">M:</b>0</span>
        <span className="flex w-[28px] justify-between"><b className="font-normal">Y:</b>0</span>
        <span className="flex w-[44px] justify-between"><b className="font-normal">K:</b>100</span>
      </div>
      <svg viewBox="0 0 16 16" width="16" height="16" aria-hidden="true">
        <path d="M0 1h16v12H0z" fill="#333" />
        <path d="M1 2h14v5H1z" fill="#f00" />
        <path d="M1 7h14v5H1z" fill="#0aa0f0" />
        <path d="M3 7.500C5 3.500 11 3.500 13 7.500C11 10.500 5 10.500 3 7.500z" fill="#fff" stroke="#333" />
        <circle cx="8" cy="7" r="1.800" fill="#fff" stroke="#333" />
        <path d="M2 15h12" stroke="#333" />
      </svg>
    </footer>
  );
}

function Watermark() {
  return (
    <div className="pointer-events-none absolute right-2.5 bottom-[7px] z-10 flex items-center opacity-75">
      <svg viewBox="0 0 44 42" width="44" height="42" aria-hidden="true">
        <defs>
          <linearGradient id="swirlGreen" x1="0" x2="1">
            <stop offset="0" stopColor="#f2e35a" />
            <stop offset="1" stopColor="#39b878" />
          </linearGradient>
        </defs>
        <path d="M1 30C2 14 18 1 42 2C24 6 15 14 11 26C9 31 3 33 1 30z" fill="#4a98d8" />
        <path d="M36 4C24 9 16 16 13 25C19 14 27 8 36 4z" fill="#fff" />
        <path d="M14 27C24 14 40 15 39 25C37 34 22 41 4 41C17 38 28 33 30 27C31 22 22 22 14 27z" fill="url(#swirlGreen)" />
        <path d="M11 31C15 36 24 34 30 28C25 31 17 31 11 31z" fill="#3f8fd0" />
      </svg>
      <div className="flex flex-col pb-0.5">
        <span className="text-[21px] leading-[22px] font-bold text-[#4a90d4]">极光下载站</span>
        <span className="font-['Liberation_Sans',Arial,sans-serif] text-[17px] leading-5 text-[#45b567] [-webkit-text-stroke:0.4px_#45b567]">
          www.xz7.com
        </span>
      </div>
    </div>
  );
}

function PointerArrow() {
  return (
    <svg
      viewBox="0 0 150 76"
      width="150"
      height="76"
      className="pointer-events-none absolute top-[368px] left-[85px] z-30 drop-shadow-[3px_3px_2px_rgba(0,0,0,0.5)]"
      aria-hidden="true"
    >
      <path d="M26 16L146.500 70" stroke="#f80000" strokeWidth="3.200" strokeLinecap="round" />
      <path d="M5 6L33 11.500L28 17L28 22.500z" fill="#f80000" />
    </svg>
  );
}

export default function App() {
  return (
    <div className={`relative flex h-screen flex-col border border-[#b0b0b0] bg-white px-1 pb-1 text-[13px] leading-5 text-black ${FONT}`}>
      <TitleBar />
      <MenuBar />
      <StandardBar />
      <PropertyBar />
      <div className="flex min-h-0 flex-1 bg-[#f3f3f3]">
        <Workspace />
        <div className="ml-px w-px bg-[#d2d2d2]" />
        <Docker />
        <Palette />
      </div>
      <StatusBar />
      <Watermark />
      <PointerArrow />
    </div>
  );
}
